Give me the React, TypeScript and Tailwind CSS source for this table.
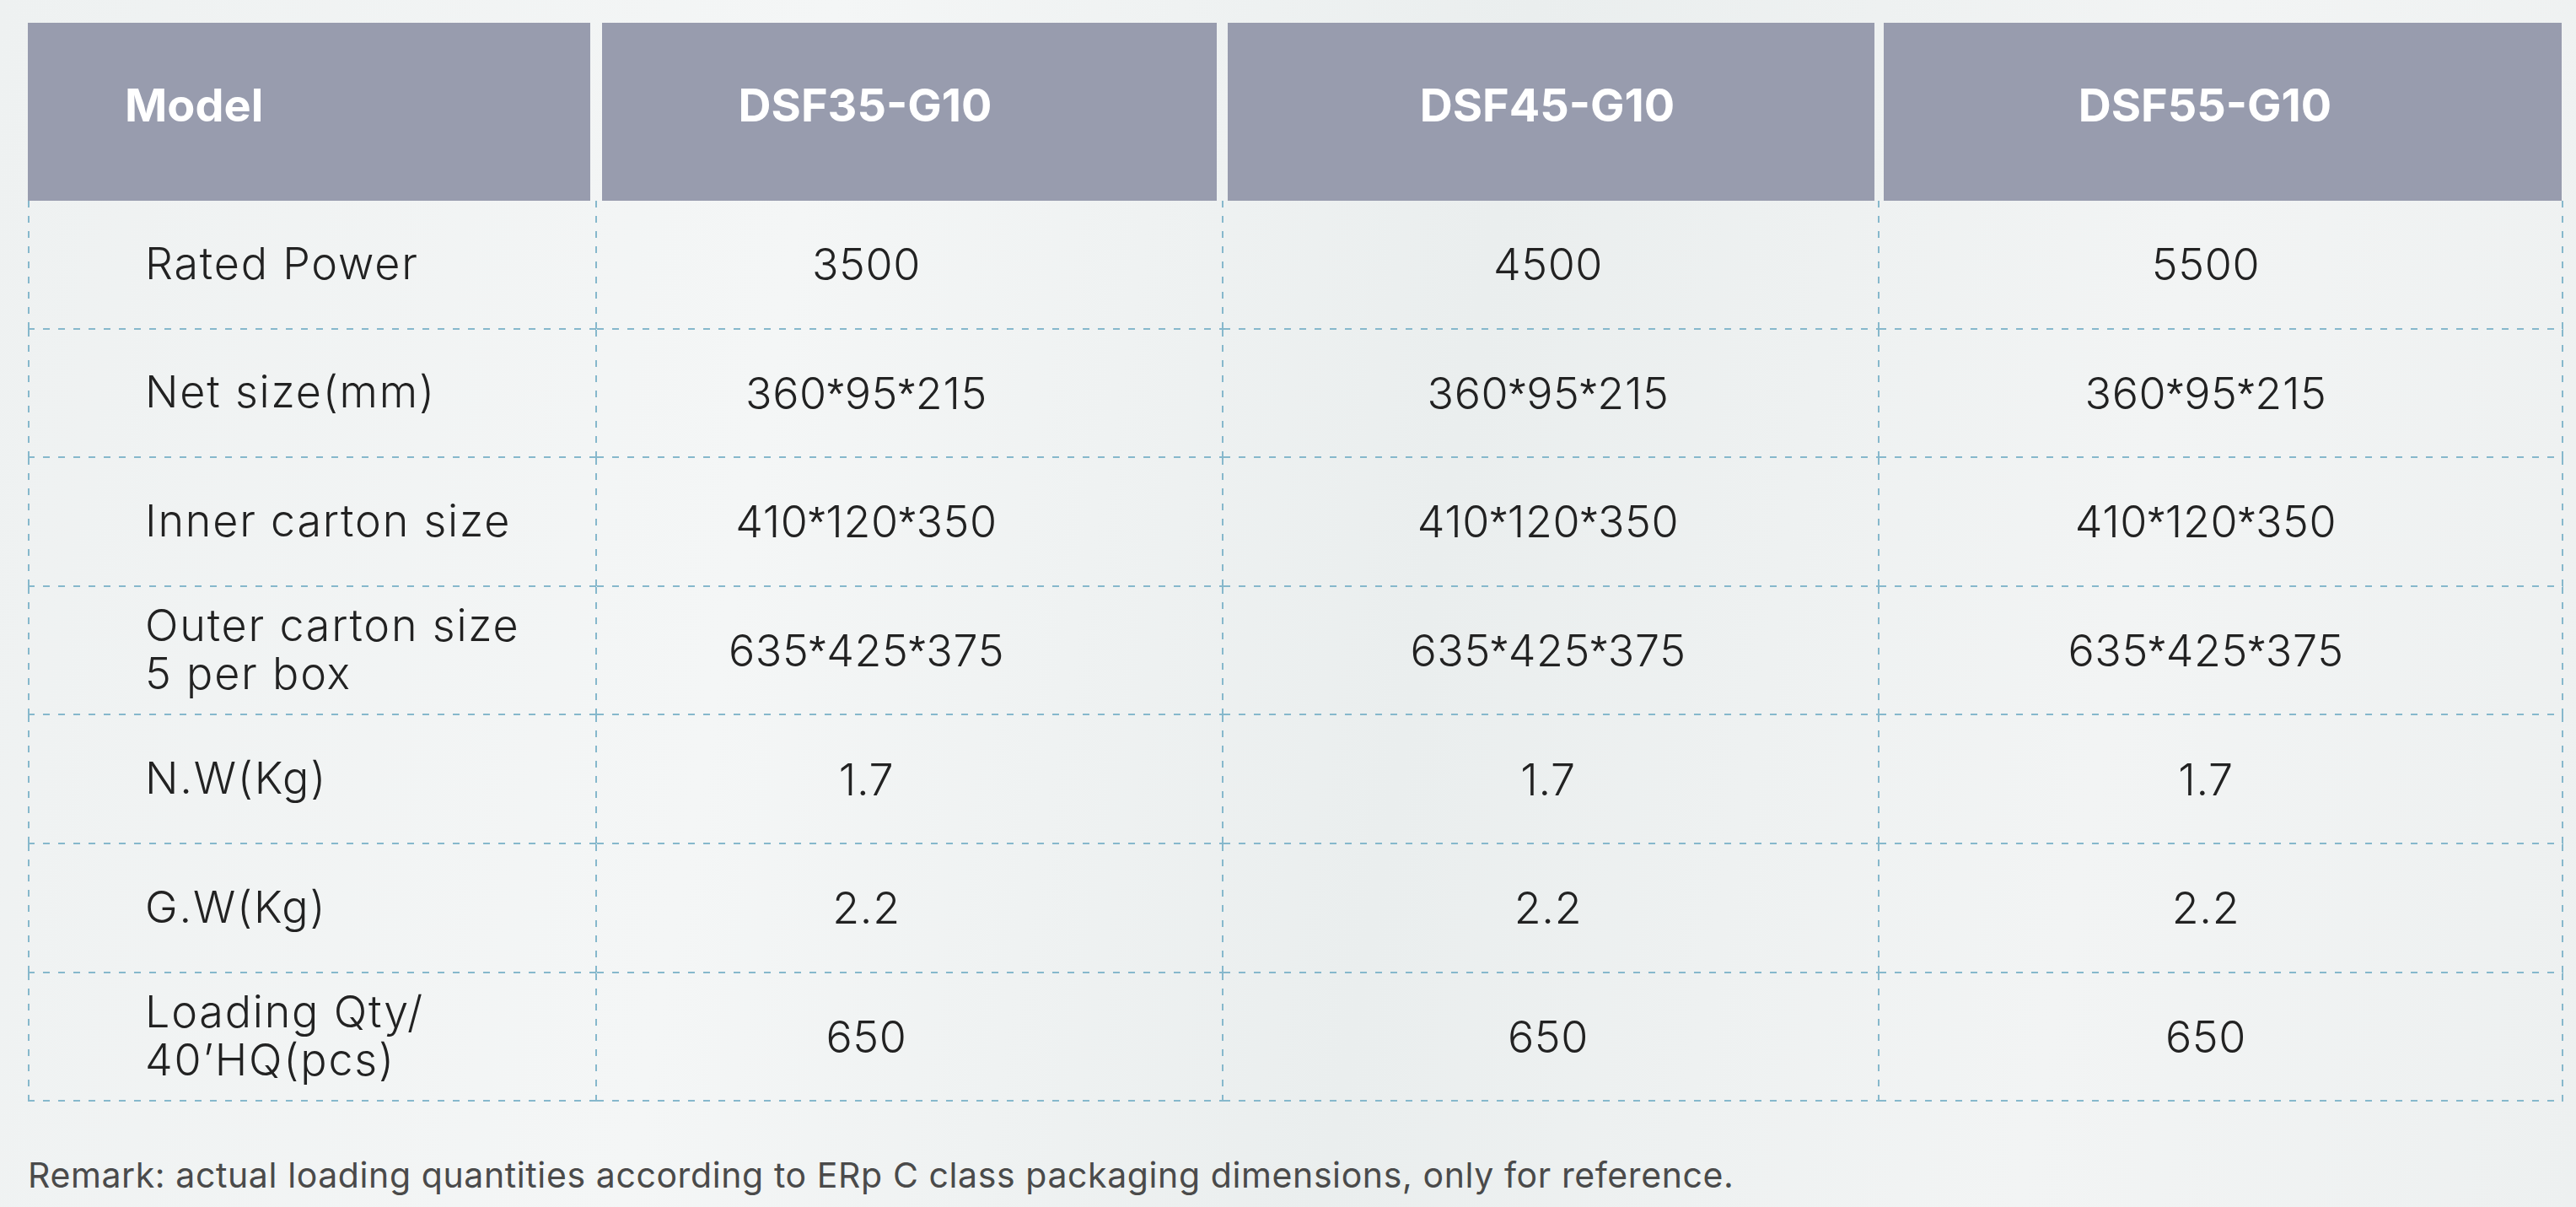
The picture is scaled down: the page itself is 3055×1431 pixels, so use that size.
const COLUMNS = ['DSF35-G10', 'DSF45-G10', 'DSF55-G10'];

const ROWS: { label: string[]; values: string[] }[] = [
  { label: ['Rated Power'], values: ['3500', '4500', '5500'] },
  { label: ['Net size(mm)'], values: ['360*95*215', '360*95*215', '360*95*215'] },
  { label: ['Inner carton size'], values: ['410*120*350', '410*120*350', '410*120*350'] },
  { label: ['Outer carton size', '5 per box'], values: ['635*425*375', '635*425*375', '635*425*375'] },
  { label: ['N.W(Kg)'], values: ['1.7', '1.7', '1.7'] },
  { label: ['G.W(Kg)'], values: ['2.2', '2.2', '2.2'] },
  { label: ['Loading Qty/', '40’HQ(pcs)'], values: ['650', '650', '650'] },
];

// header cells sit a few px inside the dashed column lines, leaving a white gap
const headerCell = [
  'ml-[0px] mr-[8px] pl-[115px] justify-start',
  'ml-[6px] mr-[8px] pr-[105px] justify-center',
  'ml-[5px] mr-[6px] pr-[9px] justify-center',
  'ml-[5px] mr-[2px] pr-[42px] justify-center',
];

const valueCell = ['pr-[104px]', 'pr-[8px]', 'pr-[37px]'];

// dashed grid lines: bottom + right (+ left on the first column)
const dashFirst =
  'bg-[repeating-linear-gradient(90deg,#86b8cc_0_8px,transparent_8px_18px),repeating-linear-gradient(180deg,#86b8cc_0_8px,transparent_8px_18px),repeating-linear-gradient(180deg,#86b8cc_0_8px,transparent_8px_18px)] bg-[length:100%_2px,2px_100%,2px_100%] bg-[position:left_bottom,right_top,left_top] bg-no-repeat';
const dashCell =
  'bg-[repeating-linear-gradient(90deg,#86b8cc_0_8px,transparent_8px_18px),repeating-linear-gradient(180deg,#86b8cc_0_8px,transparent_8px_18px)] bg-[length:100%_2px,2px_100%] bg-[position:left_bottom,right_top] bg-no-repeat';

function Value({ text }: { text: string }) {
  const parts = text.split('*');
  return (
    <span>
      {parts.map((p, i) => (
        <span key={i}>
          {i > 0 && <span className="font-['Liberation_Sans'] font-normal">*</span>}
          {p}
        </span>
      ))}
    </span>
  );
}

export default function App() {
  return (
    <div
      className="w-[3055px] h-[1431px] overflow-hidden bg-[linear-gradient(100deg,#eef1f1_0%,#f4f6f6_30%,#eaeeee_55%,#f2f4f4_80%,#edf0f0_100%)] pl-[33px] pt-[27px]"
      style={{ fontFamily: 'Inter, "Noto Sans", sans-serif' }}
    >
      <div className="w-[3007px]">
        <div className="grid grid-cols-[675px_743px_778px_811px] h-[211px]">
          {['Model', ...COLUMNS].map((h, i) => (
            <div
              key={h}
              className={`flex items-center pb-4 bg-[#989cae] text-white font-bold text-[54px] leading-none ${headerCell[i]}`}
            >
              {h}
            </div>
          ))}
        </div>

        {ROWS.map((row, r) => (
          <div key={r} className="grid grid-cols-[675px_743px_778px_811px] h-[152.6px]">
            <div
              className={`flex flex-col justify-center pl-[139px] pb-[4px] text-[52px] leading-[57px] tracking-[1.8px] font-light text-[#222] ${dashFirst}`}
            >
              {row.label.map((l) => (
                <span key={l}>{l}</span>
              ))}
            </div>
            {row.values.map((v, c) => (
              <div
                key={c}
                className={`flex items-center justify-center text-[52px] leading-none tracking-[0.6px] font-light text-[#222] ${dashCell} ${valueCell[c]}`}
              >
                <Value text={v} />
              </div>
            ))}
          </div>
        ))}
      </div>

      <p className="mt-[63px] text-[41px] leading-[48px] tracking-[0.6px] text-[#4a4a4a]">
        Remark: actual loading quantities according to ERp C class packaging dimensions, only for reference.
      </p>
    </div>
  );
}
